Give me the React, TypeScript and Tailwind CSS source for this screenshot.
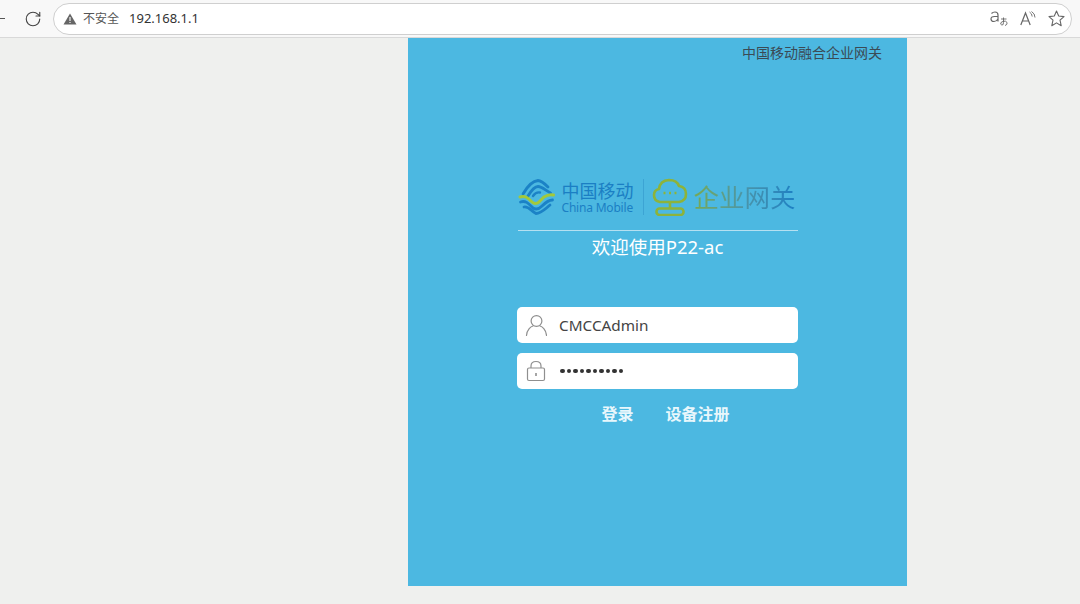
import { RotateCw } from "lucide-react";

const fontStack = "font-['Noto_Sans','Noto_Sans_CJK_SC',sans-serif]";

function ChinaMobileMark() {
    return (
        <svg width="37" height="38" viewBox="0 0 37 38" fill="none" strokeLinecap="round" className="shrink-0">
            <path d="M5 16 C9 9 14 3 20 2.5 C23 2.5 26 5 30 9" stroke="#1b82c6" strokeWidth="2.8" />
            <path d="M10 18 C13 13 16 8.5 20 8.5 C24 8.5 27 12 32.5 15" stroke="#1b82c6" strokeWidth="2.8" />
            <path d="M15 18 C17 15 19 14 22 14.5" stroke="#1b82c6" strokeWidth="2.4" />
            <path d="M2 19 C7 17 10 20 14 24 C16 26 19 26 21 24 L26 19 C29 17 32 16 35.5 17" stroke="#a3c93a" strokeWidth="3" />
            <path d="M2.5 24 C8 22 11 26 15 30 C18 32 21 31 24 28 C27 25 30 22 34.5 22" stroke="#1b82c6" strokeWidth="2.8" />
            <path d="M6 29 C11 28 13 33 18 35.5 C23 35.5 27 31 32 27" stroke="#1b82c6" strokeWidth="2.8" />
        </svg>
    );
}

function CloudMark() {
    return (
        <svg width="36" height="38" viewBox="0 0 36 38" fill="none" stroke="#8db33a" strokeWidth="2.6" className="shrink-0">
            <path d="M10 24 H8 Q2 23 2 17 Q2 12 7 11 Q8 2.5 17 2 Q25 2 27 8 Q34 9 34 16 Q34 23 27 24 H10" strokeLinejoin="round" />
            <path d="M18 24 V31" />
            <rect x="4.5" y="30.5" width="27" height="6.5" rx="3" />
            <path d="M11.5 15 h2 M17 15 h2 M22.5 15 h2" strokeWidth="2.4" />
        </svg>
    );
}

function UserMark() {
    return (
        <svg width="22" height="22" viewBox="0 0 22 22" fill="none" stroke="#8f8f8f" strokeWidth="1.2">
            <circle cx="11.5" cy="7" r="5.4" />
            <path d="M1.5 21.5 C2 15.5 6 12.5 8 12 M21.5 21.5 C21 15.5 17 12.5 15 12" strokeLinecap="round" />
        </svg>
    );
}

function LockMark() {
    return (
        <svg width="20" height="22" viewBox="0 0 20 22" fill="none" stroke="#8f8f8f" strokeWidth="1.2">
            <path d="M5 8 V6 Q5 1.5 10 1.5 Q15 1.5 15 6 V8" />
            <rect x="1.5" y="8" width="17" height="12.5" rx="1.5" />
            <path d="M10 13 V16" strokeWidth="1.6" />
        </svg>
    );
}

function TranslateMark() {
    return (
        <svg width="18" height="15" viewBox="0 0 18 15" fill="none" stroke="#666666" strokeWidth="1.2">
            <path d="M1.5 2.5 Q3 1 5 1 Q8 1 8 4 V10.5 M8 5.5 H4.5 Q1 5.5 1 8 Q1 10.5 4 10.5 Q6.5 10.5 8 8" />
            <path d="M11 8 H16.5 M13.5 6.5 V11.5 Q13.5 14.5 11.8 14 Q10 13.5 11 11.5 Q13 9.8 15.5 10.2 Q17.5 11 17 13 Q16.5 14 15 14.5" strokeWidth="0.9" />
        </svg>
    );
}

function ReadAloudMark() {
    return (
        <svg width="16" height="15" viewBox="0 0 16 15" fill="none" stroke="#666666" strokeWidth="1.2">
            <path d="M0.8 14 L5.5 2 L10.2 14 M2.5 10 H8.5" />
            <path d="M9.5 1 Q12 2.5 12.2 5.5 M11.5 0.5 Q15 2.5 15 6.5" strokeWidth="0.9" />
        </svg>
    );
}

function StarMark() {
    return (
        <svg width="17" height="17" viewBox="0 0 17 17" fill="none" stroke="#666666" strokeWidth="1.1" strokeLinejoin="round">
            <path d="M8.5 1 L10.7 6 L16 6.6 L12 10.2 L13.2 15.7 L8.5 12.9 L3.8 15.7 L5 10.2 L1 6.6 L6.3 6 Z" />
        </svg>
    );
}

export default function App() {
    return (
        <div className={`flex h-[604px] w-[1080px] flex-col overflow-hidden bg-[#eff0ee] ${fontStack}`}>
            {/* Browser toolbar */}
            <div className="flex h-[38px] shrink-0 items-center border-b border-[#d9d9d9] bg-[#f8f8f8]">
                <div className="h-px w-[5px] bg-[#555555]" />
                <RotateCw className="ml-[19px] h-[18px] w-[18px] text-[#444444]" strokeWidth={1.5} />
                <div className="ml-[11px] flex h-[32px] w-[1019px] items-center rounded-full border border-[#cfcfcf] bg-white pl-[9px] pr-[6px]">
                    <svg width="14" height="12" viewBox="0 0 14 12" className="shrink-0">
                        <path d="M7 0.5 L13.5 11.5 H0.5 Z" fill="#666666" />
                        <path d="M7 4 V8 M7 9 V10" stroke="#ffffff" strokeWidth="1.1" />
                    </svg>
                    <span className="ml-[6px] text-[12px] text-[#555555]">不安全</span>
                    <span className="ml-[10px] text-[13px] text-[#333333]">192.168.1.1</span>
                    <div className="ml-auto flex items-center gap-[12px]">
                        <TranslateMark />
                        <ReadAloudMark />
                        <StarMark />
                    </div>
                </div>
            </div>

            {/* Login panel */}
            <div className="ml-[408px] flex h-[548px] w-[499px] flex-col items-center bg-[#4cb8e1]">
                <div className="mt-[6px] w-full pr-[25px] text-right text-[14px] leading-[18px] text-[#3b4a55]">
                    中国移动融合企业网关
                </div>

                <div className="mt-[116px] flex h-[53px] w-[280px] items-center border-b border-[#b5e0f1] pb-[14px]">
                    <ChinaMobileMark />
                    <div className="ml-[7px] flex w-[74px] flex-col pt-[2px] text-[#1b7fc4]">
                        <span className="text-[18px] leading-[20px]">中国移动</span>
                        <span className="whitespace-nowrap text-[12px] leading-[14px] tracking-[-0.2px]">China Mobile</span>
                    </div>
                    <div className="ml-[7px] mr-[8px] h-[36px] w-px bg-[#3ca4d4]" />
                    <CloudMark />
                    <span className="ml-[6px] whitespace-nowrap bg-gradient-to-r from-[#78a84f] via-[#4a94a8] to-[#1b7fc4] bg-clip-text text-[25.5px] leading-[32px] text-transparent">
                        企业网关
                    </span>
                </div>

                <div className="mt-[4px] text-[18.5px] leading-[24px] text-white">欢迎使用P22-ac</div>

                <div className="mt-[48px] flex w-[281px] flex-col gap-[10px]">
                    <div className="flex h-[36px] items-center rounded-[5px] bg-white pl-[8px]">
                        <UserMark />
                        <span className="ml-[12px] text-[15.3px] text-[#444444]">CMCCAdmin</span>
                    </div>
                    <div className="flex h-[36px] items-center rounded-[5px] bg-white pl-[9px]">
                        <LockMark />
                        <div className="ml-[14px] flex gap-[2px]">
                            {Array.from({ length: 10 }).map((_, i) => (
                                <span key={i} className="h-[4.5px] w-[4.5px] rounded-full bg-[#333333]" />
                            ))}
                        </div>
                    </div>
                </div>

                <div className="mt-[14px] flex gap-[32px] pl-[16px] text-[16px] font-semibold leading-[22px] text-[#e8f7fc]">
                    <span>登录</span>
                    <span>设备注册</span>
                </div>
            </div>
        </div>
    );
}
